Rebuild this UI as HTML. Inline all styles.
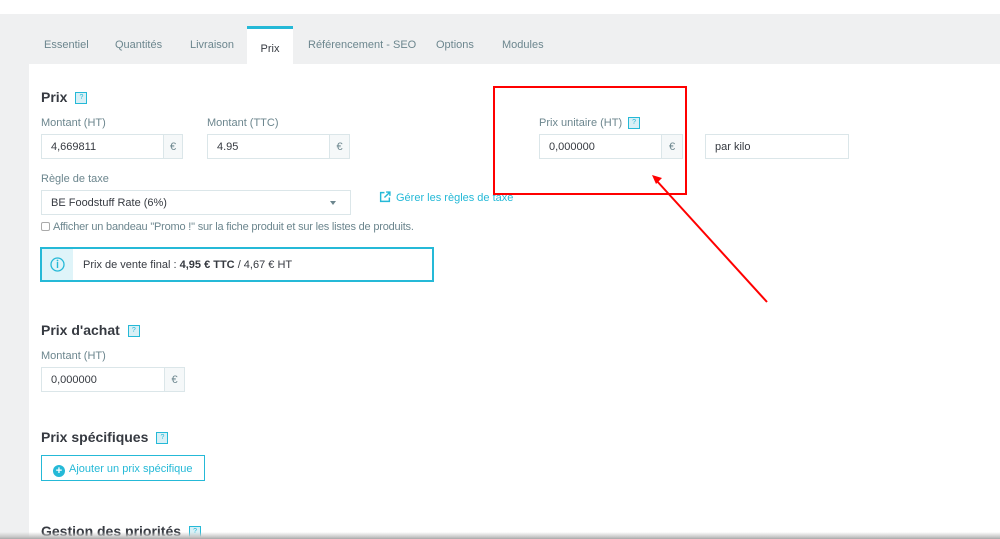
<!DOCTYPE html>
<html><head><meta charset="utf-8"><style>
*{margin:0;padding:0;box-sizing:border-box}
body{width:1000px;height:539px;overflow:hidden;background:#fff;font-family:"Liberation Sans",sans-serif;color:#363a41;position:relative}
.a{position:absolute;white-space:nowrap}
.grey{left:0;top:14px;width:1000px;height:525px;background:#eff0f1}
.panel{left:29px;top:64px;width:971px;height:475px;background:#fff}
.tab{top:39px;font-size:11px;color:#6c868e}
.act{left:247px;top:26px;width:46px;height:38px;background:#fff;border-top:3px solid #25b9d7;font-size:11px;color:#363a41;text-align:center;padding-top:14px}
h2{position:absolute;font-size:14px;font-weight:bold;color:#363a41;white-space:nowrap}
.q{display:inline-block;width:12px;height:12px;border:1.5px solid #25b9d7;background:#d9f0f6;vertical-align:middle;margin-left:8px;font-size:7px;color:#25b9d7;text-align:center;line-height:9px;font-weight:normal}
.lbl{font-size:11px;color:#6c868e}
.inp{height:25px;border:1px solid #dbe6e9;font-size:11px;color:#363a41;padding:6px 9px;background:#fff}
.add{height:25px;border:1px solid #dbe6e9;background:#f5f8f9;font-size:11px;color:#6c868e;text-align:center;padding-top:6px}
</style></head><body>
<div class="a grey"></div>
<div class="a panel"></div>
<div class="a tab" style="left:44px">Essentiel</div>
<div class="a tab" style="left:115px">Quantités</div>
<div class="a tab" style="left:190px">Livraison</div>
<div class="a act">Prix</div>
<div class="a tab" style="left:308px">Référencement - SEO</div>
<div class="a tab" style="left:436px">Options</div>
<div class="a tab" style="left:502px">Modules</div>

<h2 style="left:41px;top:89px">Prix<span class="q">?</span></h2>
<div class="a lbl" style="left:41px;top:117px">Montant (HT)</div>
<div class="a inp" style="left:41px;top:134px;width:123px">4,669811</div>
<div class="a add" style="left:163px;top:134px;width:20px">€</div>
<div class="a lbl" style="left:207px;top:117px">Montant (TTC)</div>
<div class="a inp" style="left:207px;top:134px;width:123px">4.95</div>
<div class="a add" style="left:329px;top:134px;width:21px">€</div>

<div class="a lbl" style="left:539px;top:117px">Prix unitaire (HT)<span class="q" style="margin-left:6px">?</span></div>
<div class="a inp" style="left:539px;top:134px;width:123px">0,000000</div>
<div class="a add" style="left:661px;top:134px;width:22px">€</div>
<div class="a inp" style="left:705px;top:134px;width:144px">par kilo</div>

<div class="a lbl" style="left:41px;top:173px">Règle de taxe</div>
<div class="a inp" style="left:41px;top:190px;width:310px;height:25px;padding-left:9px">BE Foodstuff Rate (6%)<span style="position:absolute;right:14px;top:10px;width:0;height:0;border-left:3px solid transparent;border-right:3px solid transparent;border-top:4px solid #6c868e"></span></div>
<div class="a" style="left:379px;top:191px;font-size:11px;color:#25b9d7"><svg width="12" height="12" viewBox="0 0 11 11" style="vertical-align:-2px;margin-right:5px"><path d="M5 1.5H1.5v8h8V6M6.5 1h3.5v3.5M10 1L5 6" fill="none" stroke="#25b9d7" stroke-width="1.3"/></svg>Gérer les règles de taxe</div>
<div class="a" style="left:41px;top:221px;font-size:11px;color:#6c868e;letter-spacing:-0.2px"><span style="display:inline-block;width:9px;height:9px;border:1px solid #aaa;border-radius:2px;vertical-align:-1px;margin-right:3px"></span>Afficher un bandeau "Promo !" sur la fiche produit et sur les listes de produits.</div>
<div class="a" style="left:40px;top:247px;width:394px;height:35px;border:2px solid #25b9d7">
 <div class="a" style="left:0;top:0;width:31px;height:31px;background:#dff4f9"><svg width="31" height="31" viewBox="0 0 31 31"><circle cx="15.5" cy="15.5" r="6.5" fill="none" stroke="#25b9d7" stroke-width="1.3"/><path d="M15.5 13v6" stroke="#25b9d7" stroke-width="1.4"/><circle cx="15.5" cy="11.5" r=".9" fill="#25b9d7"/></svg></div>
 <div class="a" style="left:41px;top:10px;font-size:11px;color:#363a41">Prix de vente final : <b>4,95 € TTC</b> / 4,67 € HT</div>
</div>

<h2 style="left:41px;top:322px">Prix d'achat<span class="q">?</span></h2>
<div class="a lbl" style="left:41px;top:350px">Montant (HT)</div>
<div class="a inp" style="left:41px;top:367px;width:124px">0,000000</div>
<div class="a add" style="left:164px;top:367px;width:21px">€</div>

<h2 style="left:41px;top:429px">Prix spécifiques<span class="q">?</span></h2>
<div class="a" style="left:41px;top:455px;width:164px;height:26px;border:1px solid #25b9d7;font-size:11px;color:#25b9d7;padding:7px 0 0 11px"><span style="display:inline-block;width:12px;height:12px;border-radius:50%;background:#25b9d7;color:#fff;font-size:11px;line-height:12px;text-align:center;font-weight:bold;vertical-align:-2px;margin-right:4px">+</span>Ajouter un prix spécifique</div>

<h2 style="left:41px;top:523px">Gestion des priorités<span class="q">?</span></h2>
<div class="a" style="left:0;top:532px;width:1000px;height:7px;background:linear-gradient(#fff0,#c8c8c8 70%,#a8a8a8)"></div>

<div class="a" style="left:493px;top:86px;width:194px;height:109px;border:2px solid #f00"></div>
<svg class="a" style="left:0;top:0" width="1000" height="539"><line x1="767" y1="302" x2="656" y2="180" stroke="#f00" stroke-width="2"/><path d="M652 175l10 3-6 6z" fill="#f00"/></svg>
</body></html>
